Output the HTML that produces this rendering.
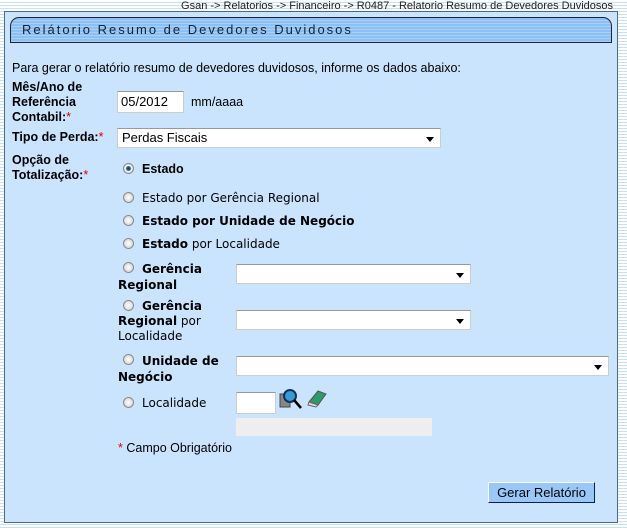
<!DOCTYPE html>
<html><head><meta charset="utf-8"><style>
body{margin:0;width:627px;height:528px;overflow:hidden;position:relative;font-family:Verdana,"DejaVu Sans",sans-serif;font-size:12px;
background:repeating-linear-gradient(#fff 0,#fff 2px,#c6e0f8 2px,#c6e0f8 3px);}
.a{position:absolute;white-space:nowrap}
.f{font-family:"Liberation Sans",Arial,sans-serif}
#p{position:absolute;left:4px;top:11px;width:612px;height:510px;background:#cbe4fd;border:1px solid #4a6a88;}
#h{position:absolute;left:10px;top:17px;width:600px;height:24px;border:1px solid #223;border-radius:9px 9px 0 0;
background:repeating-linear-gradient(#8dc0f2 0,#8dc0f2 2px,#a8d0f8 2px,#a8d0f8 3px);}
.in{position:absolute;background:#fff;border:1px solid #ccc;border-top-color:#999}
.sel::after{content:"";position:absolute;right:6px;top:8px;border:4px solid transparent;border-top:5px solid #000}
.r{position:absolute;width:9px;height:9px;border-radius:50%;border:1px solid #888;background:radial-gradient(#fff,#ccc)}
b{font-weight:bold}
.s{color:#d00}
</style></head><body>
<div class="a f" style="right:14px;top:0;font-size:11px;color:#222">Gsan -&gt; Relatorios -&gt; Financeiro -&gt; R0487 - Relatorio Resumo de Devedores Duvidosos</div>
<div id="p"></div>
<div id="h"></div>
<div class="a f" style="left:22px;top:22px;font-size:13px;letter-spacing:2px;color:#123">Relátorio Resumo de Devedores Duvidosos</div>
<div class="a f" style="left:12px;top:61px;font-size:12.5px">Para gerar o relatório resumo de devedores duvidosos, informe os dados abaixo:</div>
<div class="a f" style="left:12px;top:80px;line-height:15px;font-size:12.5px"><b>Mês/Ano de<br>Referência<br>Contabil:</b><span class="s">*</span></div>
<div class="in f" style="left:117px;top:91px;width:62px;height:20px;font-size:13px;line-height:20px;padding-left:3px">05/2012</div>
<div class="a f" style="left:191px;top:95px;font-size:12.5px">mm/aaaa</div>
<div class="a f" style="left:12px;top:130px;font-size:12.5px"><b>Tipo de Perda:</b><span class="s">*</span></div>
<div class="in f sel" style="left:117px;top:128px;width:318px;height:18px;font-size:13px;line-height:18px;padding-left:4px">Perdas Fiscais</div>
<div class="a f" style="left:12px;top:153px;line-height:15px;font-size:12.5px"><b>Opção de<br>Totalização:</b><span class="s">*</span></div>
<div class="r" style="left:123px;top:163px;background:radial-gradient(#036 0,#2a6a9a 2px,#fff 3px,#ccc 5px)"></div>
<div class="a f" style="left:142px;top:162px;font-size:12.5px"><b>Estado</b></div>
<div class="r" style="left:123px;top:192px"></div>
<div class="a" style="left:142px;top:191px">Estado por Gerência Regional</div>
<div class="r" style="left:123px;top:215px"></div>
<div class="a" style="left:142px;top:214px"><b>Estado por Unidade de Negócio</b></div>
<div class="r" style="left:123px;top:238px"></div>
<div class="a" style="left:142px;top:237px"><b>Estado</b> por Localidade</div>
<div class="r" style="left:123px;top:262px"></div>
<div class="a" style="left:118px;top:261px;line-height:16px"><span style="margin-left:24px"></span><b>Gerência<br>Regional</b></div>
<div class="in sel" style="left:236px;top:264px;width:233px;height:18px"></div>
<div class="r" style="left:123px;top:300px"></div>
<div class="a" style="left:118px;top:299px;line-height:15px"><span style="margin-left:24px"></span><b>Gerência<br>Regional</b> por<br>Localidade</div>
<div class="in sel" style="left:236px;top:310px;width:233px;height:18px"></div>
<div class="r" style="left:123px;top:354px"></div>
<div class="a" style="left:118px;top:353px;line-height:16px"><span style="margin-left:24px"></span><b>Unidade de<br>Negócio</b></div>
<div class="in sel" style="left:236px;top:356px;width:371px;height:18px"></div>
<div class="r" style="left:123px;top:397px"></div>
<div class="a" style="left:142px;top:396px">Localidade</div>
<div class="in" style="left:236px;top:392px;width:38px;height:20px"></div>
<svg class="a" style="left:279px;top:388px" width="24" height="22"><rect x="1" y="6" width="10" height="13" fill="#888" stroke="#444"/><circle cx="11" cy="8" r="6" fill="#3a9ad8" stroke="#135" stroke-width="2"/><line x1="15" y1="12" x2="22" y2="20" stroke="#000" stroke-width="2.5"/></svg>
<svg class="a" style="left:306px;top:388px" width="22" height="20"><path d="M3 14 L12 3 L20 6 L12 17 Z" fill="#2e9a6a" stroke="#555"/><path d="M3 14 L12 17 L10 19 L2 17 Z" fill="#ddd" stroke="#666"/></svg>
<div class="a" style="left:236px;top:418px;width:196px;height:18px;background:#eee"></div>
<div class="a f" style="left:118px;top:441px;font-size:12.5px"><span class="s">*</span> Campo Obrigatório</div>
<div class="a f" style="left:488px;top:482px;width:105px;height:19px;background:#99c8f8;border:1px solid #0a1f5a;border-top-color:#fff;border-left-color:#fff;text-align:center;line-height:19px;font-size:13px">Gerar Relatório</div>
</body></html>
